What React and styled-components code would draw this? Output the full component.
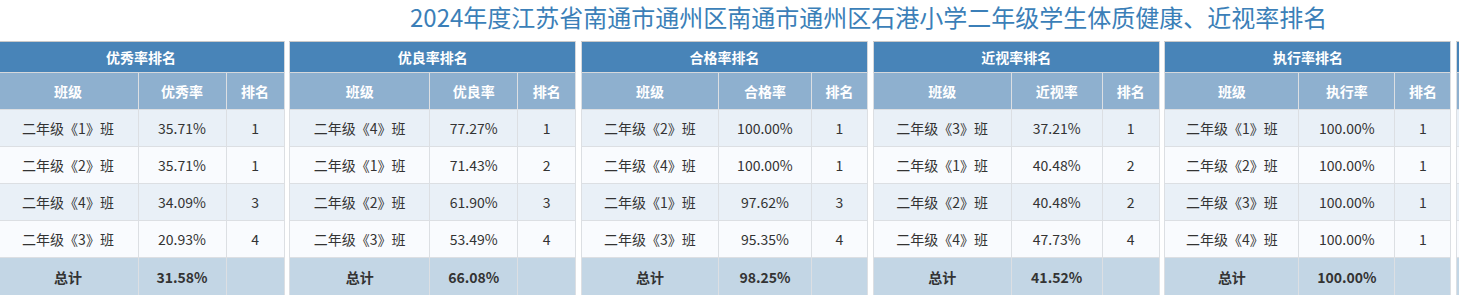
import React from "react";
import styled, { createGlobalStyle } from "styled-components";

const GlobalStyle = createGlobalStyle`
  html, body { margin: 0; padding: 0; background: #fff; }
  body {
    font-family: "Noto Sans CJK SC", "Noto Sans", sans-serif;
    overflow: hidden;
  }
`;

const Page = styled.div`
  width: 1459px;
  height: 295px;
  overflow: hidden;
`;

const Title = styled.h1`
  margin: 0;
  height: 41px;
  padding-left: 410px;
  box-sizing: border-box;
  font-size: 24px;
  font-weight: normal;
  line-height: 34px;
  color: #3b7fb8;
  white-space: nowrap;
`;

const Row = styled.div`
  display: flex;
  gap: 4.7px;
  margin-left: -2.5px;
`;

const Table = styled.table`
  flex: none;
  width: 286px;
  border-collapse: collapse;
  table-layout: fixed;
  font-size: 14px;
  color: #333;
  text-align: center;
`;

const Cell = styled.td`
  border: 1px solid #dcdfe3;
  padding: 0;
  height: 36px;
  white-space: nowrap;
  background: ${(p) => (p.$odd ? "#e9f0f7" : "#f9fbfe")};
`;

const CaptionCell = styled.th`
  border: 1px solid #d5d8dc;
  border-top-color: #c9c9c9;
  padding: 0;
  height: 30px;
  background: #4884b8;
  color: #fff;
  font-weight: bold;
  font-size: 14px;
`;

const HeadCell = styled.th`
  border: 1px solid #dcdfe3;
  padding: 0;
  height: 36px;
  background: #8eb0cf;
  color: #fff;
  font-weight: bold;
  font-size: 14px;
`;

const TotalCell = styled.td`
  border: 1px solid #dcdfe3;
  padding: 0;
  height: 37px;
  background: #c3d6e5;
  color: #333;
  font-weight: bold;
`;

const tables = [
  {
    title: "优秀率排名",
    metric: "优秀率",
    cols: [140, 88, 58],
    rows: [
      ["二年级《1》班", "35.71%", "1"],
      ["二年级《2》班", "35.71%", "1"],
      ["二年级《4》班", "34.09%", "3"],
      ["二年级《3》班", "20.93%", "4"],
    ],
    total: "31.58%",
  },
  {
    title: "优良率排名",
    metric: "优良率",
    cols: [140, 88, 58],
    rows: [
      ["二年级《4》班", "77.27%", "1"],
      ["二年级《1》班", "71.43%", "2"],
      ["二年级《2》班", "61.90%", "3"],
      ["二年级《3》班", "53.49%", "4"],
    ],
    total: "66.08%",
  },
  {
    title: "合格率排名",
    metric: "合格率",
    cols: [137, 93, 56],
    rows: [
      ["二年级《2》班", "100.00%", "1"],
      ["二年级《4》班", "100.00%", "1"],
      ["二年级《1》班", "97.62%", "3"],
      ["二年级《3》班", "95.35%", "4"],
    ],
    total: "98.25%",
  },
  {
    title: "近视率排名",
    metric: "近视率",
    cols: [138, 91, 57],
    rows: [
      ["二年级《3》班", "37.21%", "1"],
      ["二年级《1》班", "40.48%", "2"],
      ["二年级《2》班", "40.48%", "2"],
      ["二年级《4》班", "47.73%", "4"],
    ],
    total: "41.52%",
  },
  {
    title: "执行率排名",
    metric: "执行率",
    cols: [134, 96, 56],
    rows: [
      ["二年级《1》班", "100.00%", "1"],
      ["二年级《2》班", "100.00%", "1"],
      ["二年级《3》班", "100.00%", "1"],
      ["二年级《4》班", "100.00%", "1"],
    ],
    total: "100.00%",
  },
  {
    title: "",
    metric: "",
    cols: [138, 91, 57],
    rows: [
      ["", "", ""],
      ["", "", ""],
      ["", "", ""],
      ["", "", ""],
    ],
    total: "",
    stub: true,
  },
];

function RankTable({ data }) {
  const stub = data.stub;
  return (
    <Table>
      <colgroup>
        {data.cols.map((w, i) => (
          <col key={i} style={{ width: w }} />
        ))}
      </colgroup>
      <thead>
        <tr>
          <CaptionCell colSpan={3}>{data.title}</CaptionCell>
        </tr>
        <tr>
          <HeadCell>{stub ? "" : "班级"}</HeadCell>
          <HeadCell>{data.metric}</HeadCell>
          <HeadCell>{stub ? "" : "排名"}</HeadCell>
        </tr>
      </thead>
      <tbody>
        {data.rows.map((r, i) => (
          <tr key={i}>
            {r.map((v, j) => (
              <Cell key={j} $odd={i % 2 === 0}>
                {v}
              </Cell>
            ))}
          </tr>
        ))}
        <tr>
          <TotalCell>{stub ? "" : "总计"}</TotalCell>
          <TotalCell>{data.total}</TotalCell>
          <TotalCell />
        </tr>
      </tbody>
    </Table>
  );
}

export default function App() {
  return (
    <Page>
      <GlobalStyle />
      <Title>2024年度江苏省南通市通州区南通市通州区石港小学二年级学生体质健康、近视率排名</Title>
      <Row>
        {tables.map((t, i) => (
          <RankTable key={i} data={t} />
        ))}
      </Row>
    </Page>
  );
}
